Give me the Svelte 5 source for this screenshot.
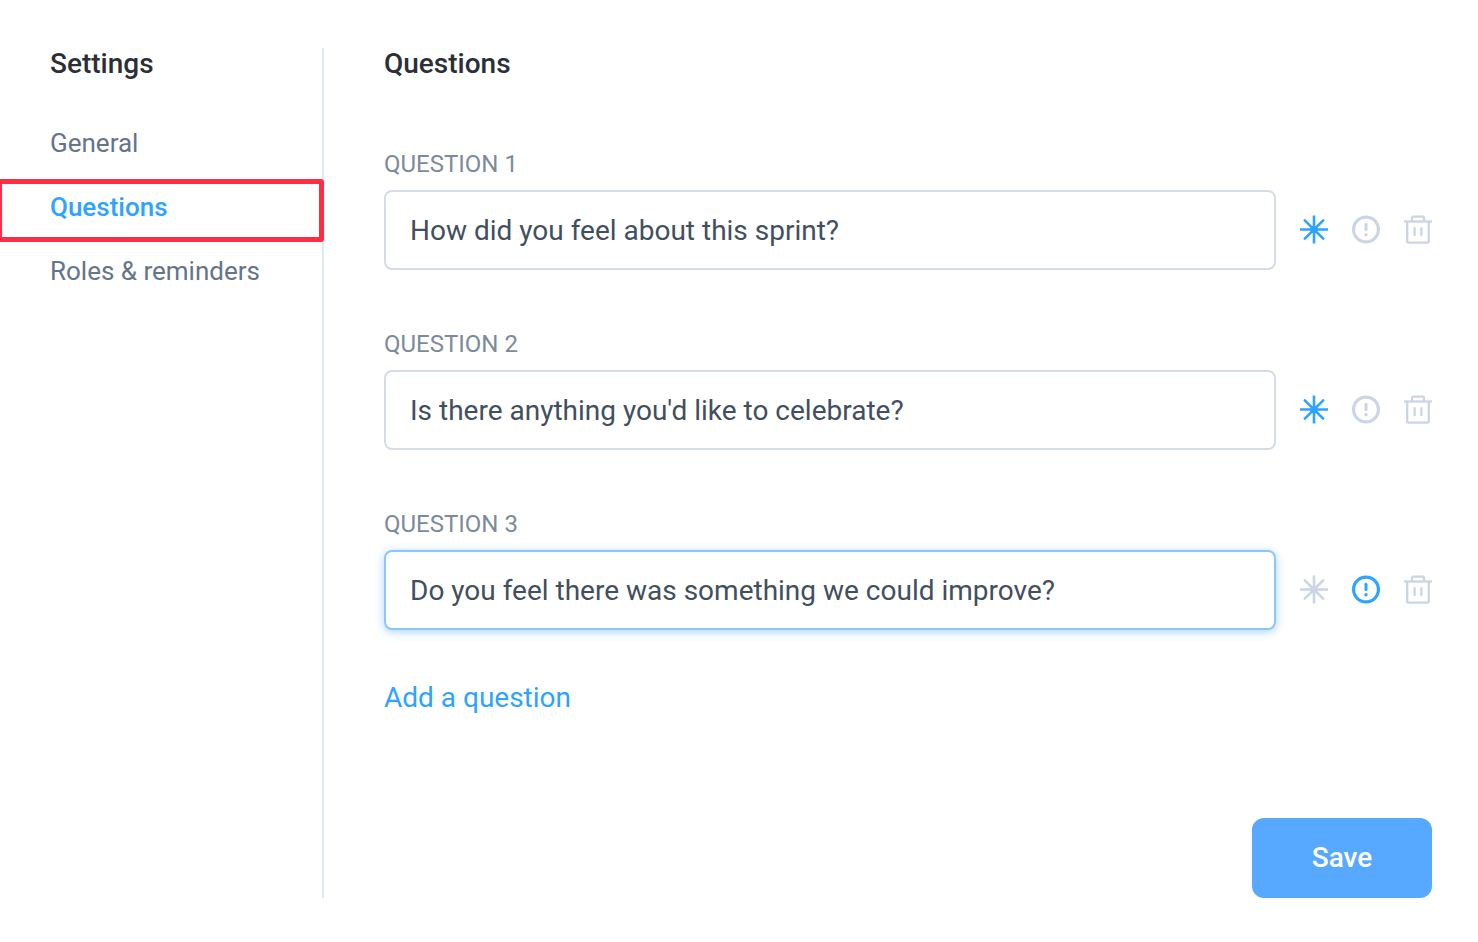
<script>
  const sections = ['General', 'Questions', 'Roles & reminders'];
  let activeSection = $state('Questions');

  let questions = $state([
    { text: 'How did you feel about this sprint?', required: true, alert: false },
    { text: "Is there anything you'd like to celebrate?", required: true, alert: false },
    { text: 'Do you feel there was something we could improve?', required: false, alert: true }
  ]);
  let focused = $state(2);

  function selectSection(event, section) {
    event.preventDefault();
    activeSection = section;
  }

  function addQuestion() {
    questions.push({ text: '', required: false, alert: false });
  }

  function removeQuestion(index) {
    questions.splice(index, 1);
  }
</script>

<div class="settings">
  <aside class="sidebar">
    <h2>Settings</h2>
    <nav>
      {#each sections as section}
        <a
          href="#settings"
          class:active={section === activeSection}
          onclick={(e) => selectSection(e, section)}>{section}</a>
      {/each}
    </nav>
  </aside>

  <form class="content" onsubmit={(e) => e.preventDefault()}>
    <h2>Questions</h2>

    <div class="questions">
      {#each questions as question, i}
        <div class="question">
          <label for={`question-${i}`}>QUESTION {i + 1}</label>
          <div class="row">
            <input
              id={`question-${i}`}
              type="text"
              class:focused={focused === i}
              bind:value={question.text}
              onfocus={() => (focused = i)} />
            <button
              type="button"
              class="icon"
              class:on={question.required}
              aria-label="Required"
              aria-pressed={question.required}
              onclick={() => (question.required = !question.required)}>
              <svg viewBox="0 0.5 28 28" fill="none" stroke="currentColor">
                <path d="M14 0v28M0 14h28" stroke-width="2.6" />
                <path d="M4.8 4.8l18.4 18.4M23.2 4.8L4.8 23.2" stroke-width="2.6" stroke-linecap="round" />
                <circle cx="14" cy="14" r="3.8" fill="currentColor" stroke="none" />
              </svg>
            </button>
            <button
              type="button"
              class="icon"
              class:on={question.alert}
              aria-label="Alert"
              aria-pressed={question.alert}
              onclick={() => (question.alert = !question.alert)}>
              <svg viewBox="0 0.5 28 28" fill="none" stroke="currentColor" stroke-linecap="round">
                <circle cx="14" cy="14" r="12.4" stroke-width="3.2" />
                <path d="M14 8.8v5.2" stroke-width="3" />
                <circle cx="14" cy="19.2" r="1.7" fill="currentColor" stroke="none" />
              </svg>
            </button>
            <button type="button" class="icon" aria-label="Delete" onclick={() => removeQuestion(i)}>
              <svg viewBox="0 0.5 28 28" fill="none" stroke="currentColor" stroke-width="2.3">
                <path d="M0 6h28" />
                <path d="M8 6V2.2q0-1 1-1h10q1 0 1 1V6" />
                <path d="M3.2 6v20q0 1.2 1.2 1.2h19.2q1.2 0 1.2-1.2V6" />
                <path d="M10.6 12.7v7M17.4 12.7v7" stroke-linecap="round" />
              </svg>
            </button>
          </div>
        </div>
      {/each}
    </div>

    <button type="button" class="add" onclick={addQuestion}>Add a question</button>

    <button type="submit" class="save">Save</button>
  </form>
</div>

<style>
  :global(body) {
    background: #fff;
  }

  .settings {
    display: flex;
    padding: 48px 46px 44px 0;
    font-family: Roboto, "Liberation Sans", sans-serif;
    font-size: 28px;
    line-height: 32px;
    color: #424f5e;
  }

  h2 {
    margin: 0;
    font-size: 28px;
    line-height: 32px;
    font-weight: 500;
    color: #2b2f36;
  }

  .sidebar {
    box-sizing: border-box;
    flex: 0 0 324px;
    border-right: 2px solid #e2e8f0;
  }

  .sidebar h2 {
    padding-left: 50px;
  }

  nav {
    display: flex;
    flex-direction: column;
    margin-top: 31px;
  }

  nav a {
    position: relative;
    padding: 16px 0 16px 50px;
    font-size: 26px;
    color: #64748b;
    text-decoration: none;
  }

  nav a.active {
    font-weight: 500;
    color: #2ea3ff;
  }

  nav a.active::after {
    content: "";
    position: absolute;
    inset: 4px -2px -3px -3px;
    border: 5px solid #ff2d41;
    border-radius: 3px;
  }

  .content {
    display: flex;
    flex: 1;
    flex-direction: column;
    align-items: flex-start;
    min-width: 0;
    padding-left: 60px;
  }

  .questions {
    display: flex;
    flex-direction: column;
    gap: 58px;
    width: 100%;
    margin-top: 68px;
  }

  .question {
    display: flex;
    flex-direction: column;
    gap: 10px;
  }

  label {
    font-size: 24px;
    color: #7d8a9b;
  }

  .row {
    display: flex;
    align-items: center;
    gap: 24px;
  }

  input {
    box-sizing: border-box;
    flex: 1;
    min-width: 0;
    height: 80px;
    padding: 0 24px;
    border: 2px solid #d6dbe8;
    border-radius: 8px;
    outline: none;
    background: #fff;
    font: inherit;
    color: inherit;
  }

  input.focused {
    border-color: #8cc6ff;
    box-shadow: 0 2px 10px rgba(46, 150, 255, 0.4);
  }

  button {
    padding: 0;
    border: none;
    background: none;
    font: inherit;
    cursor: pointer;
  }

  .icon {
    display: flex;
    width: 28px;
    height: 28px;
    color: #cbd5e6;
  }

  .icon.on {
    color: #2ea3ff;
  }

  .icon svg {
    width: 100%;
    height: 100%;
    overflow: visible;
  }

  .add {
    margin-top: 52px;
    color: #2ea3ff;
  }

  .save {
    align-self: flex-end;
    width: 180px;
    height: 80px;
    margin-top: 104px;
    border-radius: 12px;
    background: #57a8ff;
    font-weight: 500;
    color: #fff;
  }
</style>
